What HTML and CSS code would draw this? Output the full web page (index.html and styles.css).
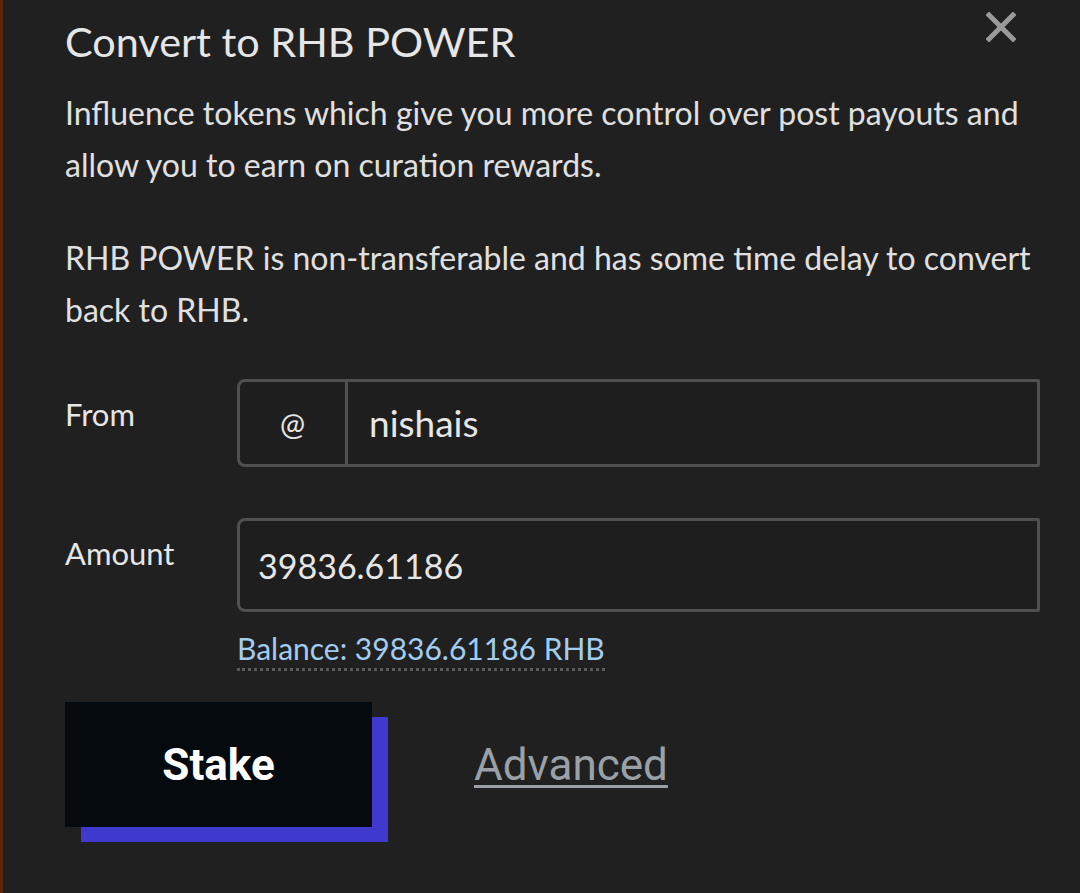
FILE: index.html
```html
<!DOCTYPE html>
<html>
<head>
<meta charset="utf-8">
<link rel="stylesheet" href="styles.css">
</head>
<body>
<div class="modal">
  <div class="header">
    <h4 class="title">Convert to RHB POWER</h4>
    <button class="close" aria-label="Close">
      <svg width="30" height="30" viewBox="0 0 30 30"><path d="M3 3 L27 27 M27 3 L3 27" stroke="#9a9a9a" stroke-width="5" stroke-linecap="square" fill="none"/></svg>
    </button>
  </div>
  <p class="text">Influence tokens which give you more control over post payouts and allow you to earn on curation rewards.</p>
  <p class="text">RHB POWER is non-transferable and has some time delay to convert back to RHB.</p>
  <div class="form">
    <div class="row row-from">
      <label class="label">From</label>
      <div class="group">
        <span class="addon">@</span>
        <span class="field field-from">nishais</span>
      </div>
    </div>
    <div class="row row-amount">
      <label class="label">Amount</label>
      <div class="amount-col">
        <div class="field field-amount">39836.61186</div>
        <div class="balance"><span class="balance-link">Balance: 39836.61186 RHB</span></div>
      </div>
    </div>
  </div>
  <div class="actions">
    <button class="stake">Stake</button>
    <a class="advanced">Advanced</a>
  </div>
</div>
</body>
</html>
```
FILE: styles.css
```css
html, body {
  margin: 0;
  padding: 0;
  background: #202020;
  height: 100%;
}
body {
  border-left: 3px solid #5e2408;
  box-sizing: border-box;
  font-family: "Lato", "Liberation Sans", sans-serif;
  color: #e2e2e2;
}
.modal {
  padding: 0 40px 0 62px;
}
.header {
  display: flex;
  justify-content: space-between;
  align-items: flex-start;
}
.title {
  margin: 0;
  padding-top: 15px;
  font-size: 41.4px;
  font-weight: 400;
  line-height: 52px;
  color: #e6e6e6;
}
.close {
  background: none;
  border: 0;
  padding: 0;
  margin: 12px 24px 0 0;
  width: 30px;
  height: 30px;
  display: block;
}
.close svg { display: block; }
.text {
  margin: 20px 0 0 0;
  font-size: 32px;
  line-height: 52px;
  color: #e0e0e0;
}
.text + .text { margin-top: 41px; }
.form {
  margin-top: 43px;
}
.row {
  display: grid;
  grid-template-columns: 172px 803px;
}
.label {
  font-size: 31px;
  color: #e6e6e6;
}
.row-from .label { padding-top: 16px; }
.row-amount { margin-top: 51px; }
.row-amount .label { padding-top: 16px; }
.group {
  display: flex;
  height: 88px;
  box-sizing: border-box;
  border: 3px solid #505050;
  border-radius: 8px 2px 2px 8px;
  background: #1e1e1e;
}
.addon {
  width: 105px;
  border-right: 3px solid #505050;
  display: flex;
  align-items: center;
  justify-content: center;
  font-size: 30px;
  color: #e6e6e6;
}
.field {
  display: flex;
  align-items: center;
  font-size: 34px;
  color: #e6e6e6;
}
.field-from { padding-left: 21px; padding-bottom: 2px; font-size: 37px; }
.field-amount {
  height: 94px;
  box-sizing: border-box;
  border: 3px solid #505050;
  border-radius: 8px 2px 2px 8px;
  padding-left: 18px;
  background: #1e1e1e;
}
.balance {
  margin-top: 18px;
}
.balance-link {
  font-size: 30px;
  color: #a3cdef;
  border-bottom: 3px dotted #5a5a5a;
  padding-bottom: 2px;
}
.actions {
  display: flex;
  align-items: center;
  margin-top: 36px;
}
.stake {
  width: 307px;
  height: 125px;
  background: #050a0f;
  border: 0;
  color: #fff;
  font-family: "Roboto", sans-serif;
  font-weight: 700;
  font-size: 44px;
  box-shadow: 16px 15px 0 #3f3acd;
  padding: 0;
}
.advanced {
  margin-left: 102px;
  font-family: "Roboto", sans-serif;
  font-size: 44px;
  color: #9aa0a6;
  text-decoration: underline;
  text-decoration-thickness: 3px;
  text-underline-offset: 5px;
}
```
